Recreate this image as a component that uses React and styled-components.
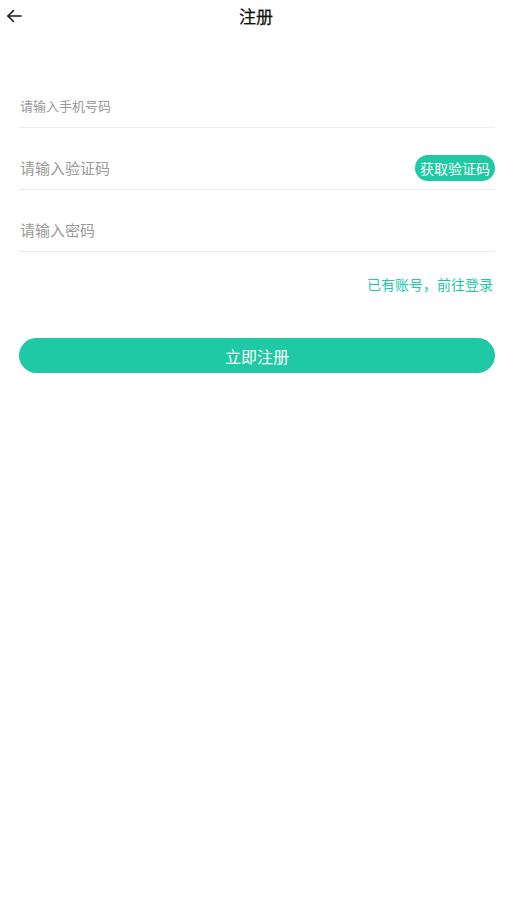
import styled, { createGlobalStyle } from "styled-components";

const GlobalStyle = createGlobalStyle`
    html, body {
        margin: 0;
        padding: 0;
        background: #fff;
    }
    body {
        font-family: "Noto Sans CJK SC", "Noto Sans", "Liberation Sans", sans-serif;
        -webkit-font-smoothing: antialiased;
    }
    * {
        box-sizing: border-box;
    }
`

const green = '#1ec9a4';

const Page = styled.div`
    width: 512px;
    min-height: 914px;
    background: #fff;
`

const Header = styled.div`
    position: relative;
    height: 34px;
    display: flex;
    align-items: center;
    justify-content: center;
`

const BackButton = styled.button`
    position: absolute;
    left: 4px;
    top: 6px;
    width: 20px;
    height: 20px;
    padding: 0;
    border: none;
    background: transparent;
    display: flex;
    align-items: center;
    justify-content: center;
    color: #222;
`

const Title = styled.h1`
    margin: 0 0 2px;
    font-size: 17px;
    font-weight: 400;
    line-height: 24px;
    color: #111;
    -webkit-text-stroke: 0.25px #111;
`

const Form = styled.div`
    margin-top: 32px;
    padding: 0 17px 0 19px;
    display: flex;
    flex-direction: column;
`

const Field = styled.label`
    height: 62px;
    padding-top: 18px;
    border-bottom: 1px solid #ececec;
    display: flex;
    align-items: center;
    gap: 8px;
`

const TextInput = styled.input`
    flex: 1;
    min-width: 0;
    border: none;
    outline: none;
    padding: 0 0 0 1px;
    background: transparent;
    font-family: inherit;
    font-size: ${p => p.$small ? '13px' : '15px'};
    color: #333;

    &::placeholder {
        color: #9a9a9a;
    }
`

const CodeButton = styled.button`
    height: 26px;
    padding: 0 5px;
    border: none;
    border-radius: 13px;
    background: ${green};
    color: #fff;
    font-family: inherit;
    font-size: 14px;
    line-height: 26px;
    white-space: nowrap;
`

const LinkRow = styled.div`
    margin-top: 22px;
    padding-right: 2px;
    display: flex;
    justify-content: flex-end;
`

const LoginLink = styled.a`
    font-size: 14px;
    line-height: 20px;
    color: ${green};
    text-decoration: none;
`

const SubmitButton = styled.button`
    margin-top: 44px;
    height: 35px;
    width: 100%;
    border: none;
    border-radius: 18px;
    background: ${green};
    color: #fff;
    font-family: inherit;
    font-size: 16px;
    font-weight: 400;
`

const ArrowLeft = () => (
    <svg width="16" height="14" viewBox="0 0 16 14" fill="none" stroke="#1a1a1a" strokeWidth="1.6" strokeLinecap="round" strokeLinejoin="round">
        <path d="M15 7H2" />
        <path d="M7.5 1.5L2 7l5.5 5.5" />
    </svg>
)

const App = () => {
    return (
        <Page>
            <GlobalStyle />
            <Header>
                <BackButton aria-label="返回">
                    <ArrowLeft />
                </BackButton>
                <Title>注册</Title>
            </Header>

            <Form>
                <Field>
                    <TextInput $small placeholder="请输入手机号码" />
                </Field>
                <Field>
                    <TextInput placeholder="请输入验证码" />
                    <CodeButton>获取验证码</CodeButton>
                </Field>
                <Field>
                    <TextInput type="password" placeholder="请输入密码" />
                </Field>

                <LinkRow>
                    <LoginLink href="#">已有账号，前往登录</LoginLink>
                </LinkRow>

                <SubmitButton>立即注册</SubmitButton>
            </Form>
        </Page>
    )
}

export default App;
